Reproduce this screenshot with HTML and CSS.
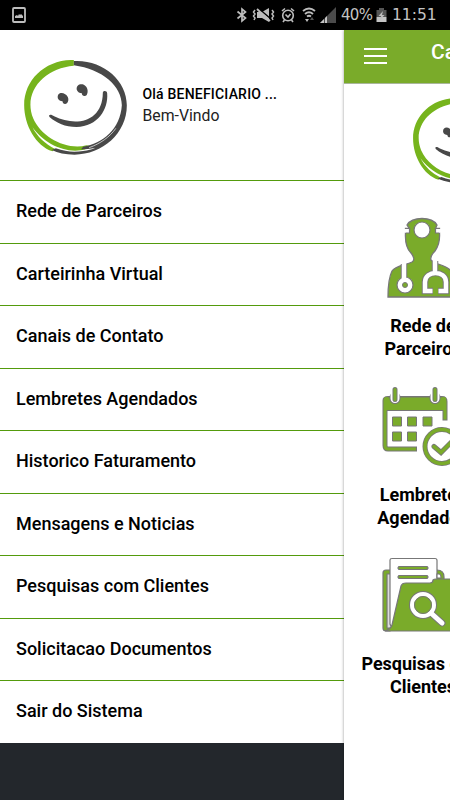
FILE: index.html
```html
<!DOCTYPE html>
<html lang="pt-BR">

<head>
    <meta charset="UTF-8">
    <title>Menu</title>
    <link rel="stylesheet" href="styles.css">
</head>

<body>
    <!-- Shared smiley logo -->
    <svg class="defs" width="0" height="0">
        <symbol id="smiley" viewBox="27 30 308 285">
            <path fill="#76b41c" d="M176 30C90 28 27 90 27 165C27 226 62 288 112 304L120 297C90 282 66 260 52 232C80 272 130 302 180 302C202 302 218 297 228 289L214 286C155 302 78 262 54 205C22 125 88 54 176 47Z" />
            <path fill="#484848" d="M176 33C262 28 335 90 335 166C335 250 262 314 178 314C150 314 128 309 110 300L122 295C152 306 178 307 204 303C219 301 230 298 241 293C226 297 210 298 198 298L204 290C262 282 316 236 320 166C320 108 262 58 176 46Z" />
            <path fill="none" stroke="#fff" stroke-width="2" d="M302 235C284 261 255 281 222 293" />
            <path fill="#484848" d="M103 201C98 191 110 193 117 199C180 230 262 218 263 128C263 121 276 121 276 130C280 178 248 230 184 231C150 231 124 219 103 201Z" />
            <path fill="#484848" d="M128 145C125 129 140 125 150 133C161 139 162 153 156 159C150 165 142 161 142 154C136 154 130 151 128 145ZM185 120C182 105 195 100 206 104C218 110 220 125 215 134C209 142 200 138 200 130C194 130 187 126 185 120Z" />
        </symbol>
    </svg>

    <!-- Status bar -->
    <div class="status-bar">
        <svg class="picture" width="14" height="16" viewBox="0 0 14 16">
            <rect x="1" y="1" width="12" height="14" rx="1" fill="none" stroke="#bdbdbd" stroke-width="1.8" />
            <path fill="#bdbdbd" d="M3 11V9L5 8L6 9L7 7L8 8L9 7L11 9V11Z" />
        </svg>
        <svg width="12" height="16" viewBox="0 0 12 16" fill="none" stroke="#bdbdbd" stroke-width="1.700">
            <path d="M1.500 4.500L9.500 11L6 14V2L9.500 5L1.500 11.500" />
        </svg>
        <svg class="mute" width="23" height="16" viewBox="0 0 23 16">
            <path fill="#bdbdbd" d="M5 5H10L17 1V15L10 11H5Z" />
            <path fill="none" stroke="#000" stroke-width="1.500" d="M6 1L19 12" />
            <path fill="none" stroke="#bdbdbd" stroke-width="1.800" d="M5 2L18 14" />
            <path fill="none" stroke="#bdbdbd" stroke-width="1.500" d="M3 3L1.500 5L3 7L1.500 9L3 11L2 13M20 3L21.500 5L20 7L21.500 9L20 11L21 13" />
        </svg>
        <svg class="alarm" width="14" height="16" viewBox="0 0 14 16" fill="none" stroke="#bdbdbd" stroke-width="1.600">
            <circle cx="7" cy="8.500" r="5.300" />
            <path d="M1 4L4 1.500M10 1.500L13 4M4.500 7.500L7 10L9.500 7M3.500 13L2 15M10.500 13L12 15" />
        </svg>
        <svg class="wifi" width="14" height="16" viewBox="0 0 14 16">
            <path fill="none" stroke="#bdbdbd" stroke-width="1.900" d="M1 4Q7 -1 13 4M3 7Q7 3.500 11 7M5 9.500Q7 8 9 9.500" />
            <path fill="#bdbdbd" d="M3 12H7L5 15Z" />
            <path fill="#555" d="M8 13L10 10L12 13Z" />
        </svg>
        <svg class="signal" width="16" height="16" viewBox="0 0 16 16">
            <path fill="#4b4b4b" d="M16 0V16H0Z" />
            <path fill="#c4c4c4" d="M7 9V16H5V11ZM4 12V16H0Z" />
        </svg>
        <span class="percent">40%</span>
        <svg class="battery" width="11" height="16" viewBox="0 0 11 16">
            <path fill="#555" d="M3 1H8V3H10.500V10H0.500V3H3Z" />
            <path fill="#c4c4c4" d="M0.500 10H10.500V15H0.500Z" />
            <path fill="#bdbdbd" d="M7 4L2.500 9H5L4 13L8.500 8H6Z" />
        </svg>
        <span class="clock">11:51</span>
    </div>

    <div class="app">
        <!-- Side menu -->
        <div class="menu">
            <div class="user">
                <svg class="logo"><use href="#smiley" /></svg>
                <div class="welcome">
                    <p class="name">Olá BENEFICIARIO ...</p>
                    <p class="greeting">Bem-Vindo</p>
                </div>
            </div>
            <ul>
                <li>Rede de Parceiros</li>
                <li>Carteirinha Virtual</li>
                <li>Canais de Contato</li>
                <li>Lembretes Agendados</li>
                <li>Historico Faturamento</li>
                <li>Mensagens e Noticias</li>
                <li>Pesquisas com Clientes</li>
                <li>Solicitacao Documentos</li>
                <li>Sair do Sistema</li>
            </ul>
        </div>

        <!-- Home page, pushed to the right by the menu -->
        <div class="page">
            <div class="toolbar">
                <div class="burger"><i></i><i></i><i></i></div>
                <span>Ca</span>
            </div>
            <svg class="page-logo"><use href="#smiley" /></svg>

            <div class="card">
                <svg width="80" height="96" viewBox="0 0 80 96">
                    <path fill="#7aab2a" stroke="#777" stroke-width="1.300" d="M37 15C40 10 47 8.500 52 8.500C58 8.500 64 10 67 15L65.500 18.500H69.500V23C70 31 68 37 65 41C62 44 60 47 61 50L65 53C75 56 82 59 84 66L87 87H18C18 76 20 65 22 61C25 56 36 55 42 52C45 50 44 47 41 43C37 39 35 32 35.500 23V18.500H39.500L37 15Z" />
                    <path fill="#fff" stroke="#777" stroke-width="1.200" d="M35 18.500H39.500V23H35M70 18.500H65.500V23H70" />
                    <path fill="#fff" d="M33 19H36V22.500H33ZM69 19H72V22.500H69Z" />
                    <circle cx="52" cy="20" r="8" fill="#fff" stroke="#777" stroke-width="1.200" />
                    <path fill="none" stroke="#777" stroke-width="6.500" d="M34 54V69M65 51V62" />
                    <circle cx="35" cy="75" r="8" fill="#fff" stroke="#777" stroke-width="1.200" />
                    <path fill="none" stroke="#777" stroke-width="6.500" d="M63 81H55V72C55 60 76 60 76 72V81H68" />
                    <path fill="none" stroke="#fff" stroke-width="4.500" d="M34 52V70M65 49V63M62.500 81H55V72C55 60 76 60 76 72V81H68.500" />
                    <circle cx="35" cy="75" r="2.500" fill="#7aab2a" stroke="#777" />
                </svg>
                <p>Rede de<br>Parceiros</p>
            </div>

            <div class="card">
                <svg width="80" height="96" viewBox="0 3.500 80 96">
                    <path fill="none" stroke="#777" stroke-width="5" stroke-linejoin="round" d="M47 73.500H18Q15 73.500 15 70V25Q15 23 18 23H72Q75 23 75 26V45" />
                    <path fill="none" stroke="#7aab2a" stroke-width="3" d="M46 73.500H18Q15 73.500 15 70V25Q15 23 18 23H72Q75 23 75 26V44" />
                    <path fill="#7aab2a" d="M14 22H76V35H14Z" />
                    <path fill="none" stroke="#777" d="M17 35H73M18 21.500H72" />
                    <path fill="none" stroke="#777" stroke-linecap="round" stroke-width="11" d="M25 22V23M65 22V23" />
                    <path fill="none" stroke="#fff" stroke-linecap="round" stroke-width="9" d="M25 19V23M65 19V23" />
                    <path fill="none" stroke="#777" stroke-linecap="round" stroke-width="5" d="M25 14V24M65 14V24" />
                    <path fill="none" stroke="#7aab2a" stroke-linecap="round" stroke-width="3" d="M25 14V24M65 14V24" />
                    <path fill="#7aab2a" stroke="#777" d="M22.500 41.500h9v9h-9ZM37.500 41.500h9v9h-9ZM53 41.500h9v9h-9ZM22.500 56.500h9v9h-9ZM37.500 56.500h9v9h-9Z" />
                    <circle cx="72" cy="71" r="21" fill="#fff" />
                    <circle cx="72" cy="71" r="17" fill="#fff" stroke="#777" stroke-width="5" />
                    <circle cx="72" cy="71" r="17" fill="none" stroke="#7aab2a" stroke-width="3.400" />
                    <path fill="none" stroke="#777" stroke-linecap="round" stroke-width="5" d="M64 71L71 77L82 66" />
                    <path fill="none" stroke="#7aab2a" stroke-linecap="round" stroke-width="3.400" d="M64 71L71 77L82 66" />
                </svg>
                <p>Lembretes<br>Agendados</p>
            </div>

            <div class="card">
                <svg width="80" height="96" viewBox="0 0 80 96">
                    <g stroke="#777" stroke-width="1.200">
                        <path fill="#7aab2a" d="M13 25Q13 22 16 22H67Q74 22 74 29V40H20V83H16Q13 83 13 80Z" />
                        <path fill="#ddd" d="M17 26H22V80H17Z" />
                        <path fill="#fff" d="M20 12Q20 10.500 22 10.500H65Q67 10.500 67 12.500V45L22 80L20 76Z" />
                        <path fill="#fff" d="M67 26H69Q71 26 71 30H67Z" />
                        <path fill="#7aab2a" stroke-linecap="round" d="M29 18.500H57Q59 20 57 21.500H29Q27 20 29 18.500ZM29 27.500H57Q59 29 57 30.500H29Q27 29 29 27.500Z" />
                        <path fill="#7aab2a" d="M31 38Q32 35 36 35H60Q63 35 63 32Q64 31 66 31H95V83H15Q21 81 22 77Z" />
                    </g>
                    <path fill="none" stroke="#777" stroke-linecap="round" stroke-width="7" d="M63 67L72 75" />
                    <circle cx="53" cy="57" r="11" fill="none" stroke="#777" stroke-width="6" />
                    <circle cx="53" cy="57" r="11" fill="#7aab2a" stroke="#fff" stroke-width="4" />
                    <circle cx="53" cy="57" r="8.500" fill="none" stroke="#777" />
                    <path fill="none" stroke="#fff" stroke-linecap="round" stroke-width="5" d="M62 66L72 75" />
                </svg>
                <p>Pesquisas com<br>Clientes</p>
            </div>
        </div>
    </div>
</body>

</html>
```
FILE: styles.css
```css
* {
    box-sizing: border-box;
}

body {
    margin: 0;
    width: 450px;
    height: 800px;
    overflow: hidden;
    font-family: Roboto, sans-serif;
    color: #000;
    background-color: #23272c;
}

p {
    margin: 0;
}

.defs {
    display: none;
}

/* Status bar */
.status-bar {
    display: flex;
    align-items: center;
    height: 30px;
    padding-left: 12px;
    background-color: #000;
    color: #c4c4c4;
    font-family: "DejaVu Sans", sans-serif;
    font-size: 15.5px;
}

.status-bar svg {
    flex: none;
}

.status-bar .picture {
    margin-right: 210px;
}

.mute {
    margin-left: 4px;
}

.alarm {
    margin-left: 6px;
}

.wifi {
    margin-left: 7px;
}

.signal {
    margin-left: 4px;
}

.percent {
    width: 35px;
    margin-left: 5px;
    font-size: 15px;
    letter-spacing: -0.7px;
}

.clock {
    margin-left: 5px;
}

.app {
    display: flex;
    height: 770px;
}

/* Side menu */
.menu {
    flex: none;
    width: 344px;
}

.user {
    display: flex;
    height: 150px;
    padding: 30px 0 0 24px;
    background-color: #fff;
}

.logo {
    width: 103px;
    height: 95px;
}

.welcome {
    margin: 24px 0 0 15.5px;
    line-height: 21px;
}

.welcome .name {
    font-size: 14px;
    font-weight: 500;
    letter-spacing: 0.2px;
}

.welcome .greeting {
    color: #222;
    font-size: 15.8px;
}

.menu ul {
    margin: 0;
    padding: 0;
    list-style: none;
}

.menu li {
    height: 62.5px;
    padding-left: 16px;
    border-top: 1px solid #549b0c;
    background-color: #fff;
    font-size: 18px;
    font-weight: 500;
    line-height: 60px;
}

/* Home page */
.page {
    position: relative;
    flex: none;
    width: 106px;
    overflow: hidden;
    background-color: #fff;
    box-shadow: 0 0 3px rgba(0, 0, 0, 0.4);
}

.toolbar {
    display: flex;
    height: 54px;
    padding-left: 20px;
    background-color: #7aab2a;
    border-bottom: 1px solid #a9b69b;
    color: #fff;
    font-size: 21px;
    font-weight: 500;
    line-height: 45px;
}

.burger {
    flex: none;
    width: 23px;
    margin: 18px 44px 0 0;
}

.burger i {
    display: block;
    height: 2px;
    margin-bottom: 5px;
    background-color: #fff;
}

.page-logo {
    display: block;
    width: 92px;
    height: 85px;
    margin: 14px 0 0 69px;
}

.card {
    width: 158px;
    height: 169px;
    text-align: center;
    font-size: 18px;
    font-weight: 700;
    line-height: 22.5px;
}

.card svg {
    display: block;
    margin: 0 0 9px 26px;
}

.page-logo + .card {
    margin-top: 27px;
}
```
